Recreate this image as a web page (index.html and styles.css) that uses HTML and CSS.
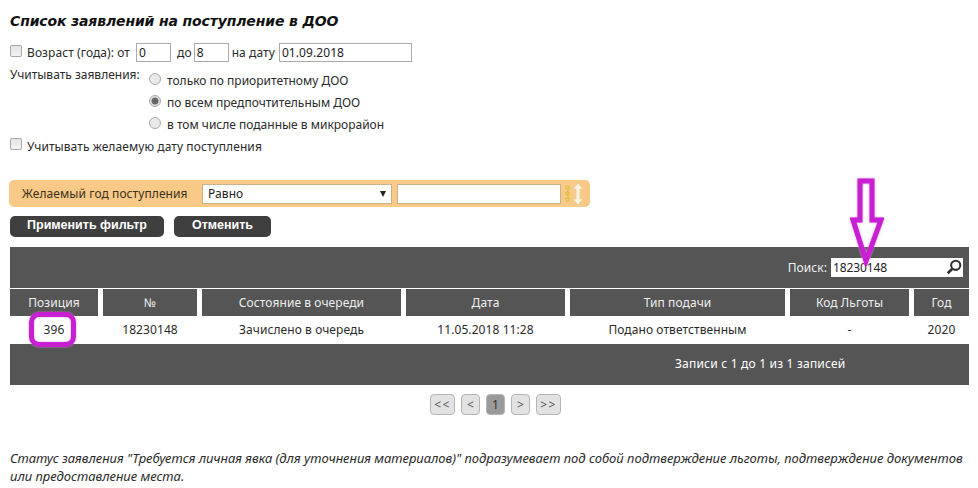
FILE: index.html
```html
<!DOCTYPE html>
<html lang="ru">
<head>
<meta charset="utf-8">
<title>Список заявлений</title>
<link rel="stylesheet" href="styles.css">
</head>
<body>
<main class="page">
  <h1 class="title">Список заявлений на поступление в ДОО</h1>
  <div class="age-row">
    <span class="check"></span>
    <span>Возраст (года): от</span>
    <span class="field f-small f-from">0</span>
    <span>до</span>
    <span class="field f-small f-to">8</span>
    <span>на дату</span>
    <span class="field f-date">01.09.2018</span>
  </div>
  <div class="consider">
    <div class="consider-label">Учитывать заявления:</div>
    <div class="radios">
      <div class="radio-row"><span class="radio"></span>только по приоритетному ДОО</div>
      <div class="radio-row"><span class="radio on"></span>по всем предпочтительным ДОО</div>
      <div class="radio-row"><span class="radio"></span>в том числе поданные в микрорайон</div>
    </div>
  </div>
  <div class="wish-row"><span class="check"></span>Учитывать желаемую дату поступления</div>

  <div class="filter-bar">
    <span class="filter-label">Желаемый год поступления</span>
    <span class="select"><span>Равно</span><span class="caret"></span></span>
    <span class="field f-filter"></span>
    <svg class="sort-icon" width="20" height="24" viewBox="0 0 20 24" aria-hidden="true">
      <path d="M2 4h3v3H2zM2 10h3v3H2zM2 16h3v3H2z" fill="none" stroke="#d9c23a" stroke-width="1"/>
      <path d="M4 6.5v10" stroke="#d9c23a" stroke-width="1"/>
      <path d="M14 1l5 6h-3v10h3l-5 6-5-6h3V7H9z" fill="#fbf3dd" stroke="#e6d3a5" stroke-width="1"/>
    </svg>
  </div>
  <div class="actions">
    <span class="btn b-apply">Применить фильтр</span>
    <span class="btn b-cancel">Отменить</span>
  </div>

  <section class="panel">
    <div class="search-row">
      <span class="search-label">Поиск:</span>
      <span class="search-box">18230148
        <svg class="lens" width="16" height="16" viewBox="0 0 14 14" aria-hidden="true">
          <circle cx="8.5" cy="5.5" r="4" fill="#fff" stroke="#333" stroke-width="1.8"/>
          <path d="M5.5 8.5L1.5 12.5" stroke="#333" stroke-width="2.4"/>
        </svg>
      </span>
    </div>
    <div class="grid head">
      <div>Позиция</div><div>№</div><div>Состояние в очереди</div><div>Дата</div><div>Тип подачи</div><div>Код Льготы</div><div>Год</div>
    </div>
    <div class="grid body-row">
      <div>396</div><div>18230148</div><div>Зачислено в очередь</div><div>11.05.2018 11:28</div><div>Подано ответственным</div><div>-</div><div>2020</div>
    </div>
    <div class="info">Записи с 1 до 1 из 1 записей</div>
  </section>

  <nav class="pager">
    <span class="pg p-wide">&lt;&lt;</span>
    <span class="pg">&lt;</span>
    <span class="pg current">1</span>
    <span class="pg">&gt;</span>
    <span class="pg p-wide">&gt;&gt;</span>
  </nav>

  <p class="note">Статус заявления "Требуется личная явка (для уточнения материалов)" подразумевает под собой подтверждение льготы, подтверждение документов или предоставление места.</p>

  <span class="ring"></span>
  <svg class="arrow" width="34" height="88" viewBox="0 0 34 88" aria-hidden="true">
    <path d="M10 3h12v39h9L16 83 3 42h7z" fill="none" stroke="#c81fd2" stroke-width="5"/>
  </svg>
</main>
</body>
</html>
```
FILE: styles.css
```css
html, body { margin: 0; padding: 0; background: #fff; }
body { font-family: "Noto Sans", "Open Sans", sans-serif; font-size: 12px; letter-spacing: .08px; color: #2a2a2a; }
.page { position: relative; width: 978px; height: 488px; overflow: hidden; padding: 12px 9px 0 10px; box-sizing: border-box; }
.title { margin: 0; font-family: "DejaVu Sans", sans-serif; font-size: 14px; letter-spacing: -.14px; font-style: italic; font-weight: bold; line-height: 18px; color: #111; }

.age-row { display: flex; align-items: center; margin-top: 13px; height: 19px; }
.check { display: inline-block; width: 10px; height: 10px; margin-right: 5px; border: 1px solid #a8a8a8; border-radius: 2px; background: linear-gradient(#e4e4e4, #f4f4f4); position: relative; top: -2px; flex: none; }
.field { display: block; box-sizing: border-box; border: 1px solid #a9a9a9; background: #fff; height: 19px; line-height: 17px; padding-left: 2px; color: #222; }
.f-small { width: 35px; }
.f-from { margin: 0 6px 0 6px; }
.f-to { margin: 0 3px 0 2px; }
.f-date { width: 133px; margin-left: 4px; }

.consider { display: flex; margin-top: 3px; }
.consider-label { width: 139px; line-height: 20px; flex: none; letter-spacing: 0; }
.radios { display: flex; flex-direction: column; margin-top: 4px; letter-spacing: 0; }
.radio-row { display: flex; align-items: center; height: 22px; }
.radio { width: 10px; height: 10px; margin-right: 6px; border: 1px solid #a8a8a8; border-radius: 50%; background: #e9e9e9; position: relative; top: -1px; flex: none; box-sizing: content-box; }
.radio.on { background: radial-gradient(circle, #666 0 3px, #e2e2e2 4px); }
.wish-row { display: flex; align-items: center; height: 22px; }

.filter-bar { display: flex; align-items: center; margin-top: 23px; margin-left: -1px; width: 581px; height: 27px; box-sizing: border-box; padding-left: 13px; background: #f8c987; border-radius: 5px; }
.filter-label { width: 180px; flex: none; color: #3a3020; }
.select { display: flex; justify-content: space-between; align-items: center; box-sizing: border-box; width: 190px; height: 20px; padding: 0 5px; background: #fff; border: 1px solid #c9b28a; color: #222; }
.caret { border-left: 3.5px solid transparent; border-right: 3.5px solid transparent; border-top: 6px solid #222; }
.f-filter { width: 164px; margin-left: 5px; border-color: #c9b28a; height: 20px; }
.sort-icon { margin-left: 3px; }

.actions { display: flex; gap: 10px; margin-top: 9px; }
.btn { display: block; box-sizing: border-box; height: 21px; line-height: 19px; text-align: center; color: #fff; background: #3f3f3f; border-radius: 5px; font-family: "Liberation Sans", sans-serif; font-weight: bold; font-size: 12.5px; letter-spacing: 0; }
.b-apply { width: 154px; }
.b-cancel { width: 97px; }

.panel { margin-top: 10px; background: #555; height: 138px; width: 959px; color: #f0f0f0; }
.search-row { display: flex; justify-content: flex-end; align-items: center; padding-right: 6px; box-sizing: border-box; border-bottom: 1px solid #fff; height: 42px; }
.search-label { margin-right: 4px; }
.search-box { position: relative; display: block; box-sizing: border-box; width: 132px; height: 19px; line-height: 19px; padding-left: 2px; background: #fff; color: #222; letter-spacing: -.1px; }
.lens { position: absolute; right: 1px; top: 1px; }
.grid { display: grid; grid-template-columns: 88px 94px 199px 159px 215px 119px 55px; column-gap: 5px; text-align: center; }
.head { height: 27px; background: #fff; }
.head > div { background: #555; line-height: 27px; color: #eee; }
.body-row { height: 28px; background: #fff; line-height: 28px; color: #2a2a2a; }
.info { height: 41px; line-height: 39px; padding-left: 665px; color: #fff; letter-spacing: .2px; }

.pager { display: flex; justify-content: center; gap: 6px; margin-top: 9px; width: 971px; }
.pg { display: block; box-sizing: border-box; width: 19px; height: 21px; line-height: 19px; text-align: center; border: 1px solid #b5b5b5; border-radius: 4px; background: #e2e2e2; color: #555; }
.p-wide { width: 25px; letter-spacing: 1.5px; }
.current { background: #9a9a9a; color: #333; }

.note { margin: 34px 0 0; font-style: italic; font-size: 13px; letter-spacing: -.015px; line-height: 18px; color: #2a2a2a; }

.ring { position: absolute; left: 29px; top: 312px; width: 47px; height: 35px; box-sizing: border-box; border: 5px solid #c81fd2; border-radius: 10px; box-shadow: 0 0 2px #e58be8, inset 0 0 2px #e58be8; }
.arrow { position: absolute; left: 850px; top: 178px; filter: drop-shadow(0 0 1px #e58be8); }
```
